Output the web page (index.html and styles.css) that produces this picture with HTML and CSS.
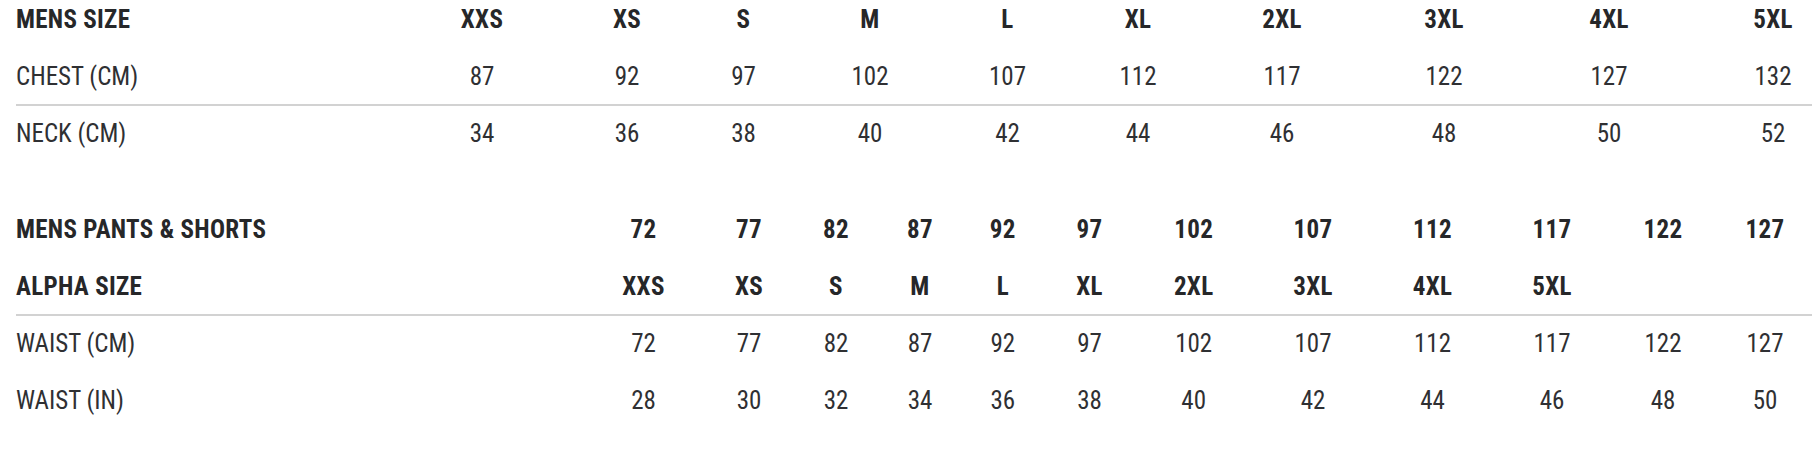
FILE: index.html
```html
<!DOCTYPE html>
<html lang="en">
<head>
<meta charset="utf-8">
<title>Size Chart</title>
<link rel="stylesheet" href="styles.css">
</head>
<body>
<div class="chart">
  <div class="table tops">
    <div class="row head first">
      <div class="cell label">MENS SIZE</div>
      <div class="cell">XXS</div><div class="cell">XS</div><div class="cell">S</div><div class="cell">M</div><div class="cell">L</div><div class="cell">XL</div><div class="cell">2XL</div><div class="cell">3XL</div><div class="cell">4XL</div><div class="cell">5XL</div>
    </div>
    <div class="row ruled">
      <div class="cell label">CHEST (CM)</div>
      <div class="cell">87</div><div class="cell">92</div><div class="cell">97</div><div class="cell">102</div><div class="cell">107</div><div class="cell">112</div><div class="cell">117</div><div class="cell">122</div><div class="cell">127</div><div class="cell">132</div>
    </div>
    <div class="row">
      <div class="cell label">NECK (CM)</div>
      <div class="cell">34</div><div class="cell">36</div><div class="cell">38</div><div class="cell">40</div><div class="cell">42</div><div class="cell">44</div><div class="cell">46</div><div class="cell">48</div><div class="cell">50</div><div class="cell">52</div>
    </div>
  </div>

  <div class="table pants">
    <div class="row head">
      <div class="cell label">MENS PANTS &amp; SHORTS</div>
      <div class="cell">72</div><div class="cell">77</div><div class="cell">82</div><div class="cell">87</div><div class="cell">92</div><div class="cell">97</div><div class="cell">102</div><div class="cell">107</div><div class="cell">112</div><div class="cell">117</div><div class="cell">122</div><div class="cell">127</div>
    </div>
    <div class="row head ruled">
      <div class="cell label">ALPHA SIZE</div>
      <div class="cell">XXS</div><div class="cell">XS</div><div class="cell">S</div><div class="cell">M</div><div class="cell">L</div><div class="cell">XL</div><div class="cell">2XL</div><div class="cell">3XL</div><div class="cell">4XL</div><div class="cell">5XL</div><div class="cell"></div><div class="cell"></div>
    </div>
    <div class="row">
      <div class="cell label">WAIST (CM)</div>
      <div class="cell">72</div><div class="cell">77</div><div class="cell">82</div><div class="cell">87</div><div class="cell">92</div><div class="cell">97</div><div class="cell">102</div><div class="cell">107</div><div class="cell">112</div><div class="cell">117</div><div class="cell">122</div><div class="cell">127</div>
    </div>
    <div class="row">
      <div class="cell label">WAIST (IN)</div>
      <div class="cell">28</div><div class="cell">30</div><div class="cell">32</div><div class="cell">34</div><div class="cell">36</div><div class="cell">38</div><div class="cell">40</div><div class="cell">42</div><div class="cell">44</div><div class="cell">46</div><div class="cell">48</div><div class="cell">50</div>
    </div>
  </div>
</div>
</body>
</html>
```
FILE: styles.css
```css
html, body {
  margin: 0;
  padding: 0;
  background: #ffffff;
}

body {
  font-family: Roboto, "Liberation Sans", sans-serif;
  font-stretch: 75%;
  font-size: 25px;
  color: #2f3033;
  overflow: hidden;
}

.chart {
  display: flex;
  flex-direction: column;
  gap: 39px;
  margin-left: 16px;
}

.table {
  display: flex;
  flex-direction: column;
}

.row {
  display: grid;
  height: 57px;
  box-sizing: border-box;
  align-items: center;
}

.tops .row {
  grid-template-columns: 340px 252px 38px 195px 58px 217px 44px 244px 80px 250px 78px;
}

.pants .row {
  grid-template-columns: 562px 131px 80px 94px 74px 91.6px 81.8px 126.6px 112px 127px 112px 110px 94px;
}

.row.first {
  height: 48.5px;
  align-items: end;
  padding-bottom: 14.5px;
}

.row.ruled {
  border-bottom: 2px solid #d2d2d2;
  padding-top: 2px;
}

.cell {
  line-height: 28px;
  text-align: center;
  white-space: nowrap;
  display: flex;
  justify-content: center;
}

.cell.label {
  justify-content: flex-start;
  text-align: left;
}

.head .cell {
  font-weight: 700;
  letter-spacing: 0.3px;
  color: #262729;
}
```
